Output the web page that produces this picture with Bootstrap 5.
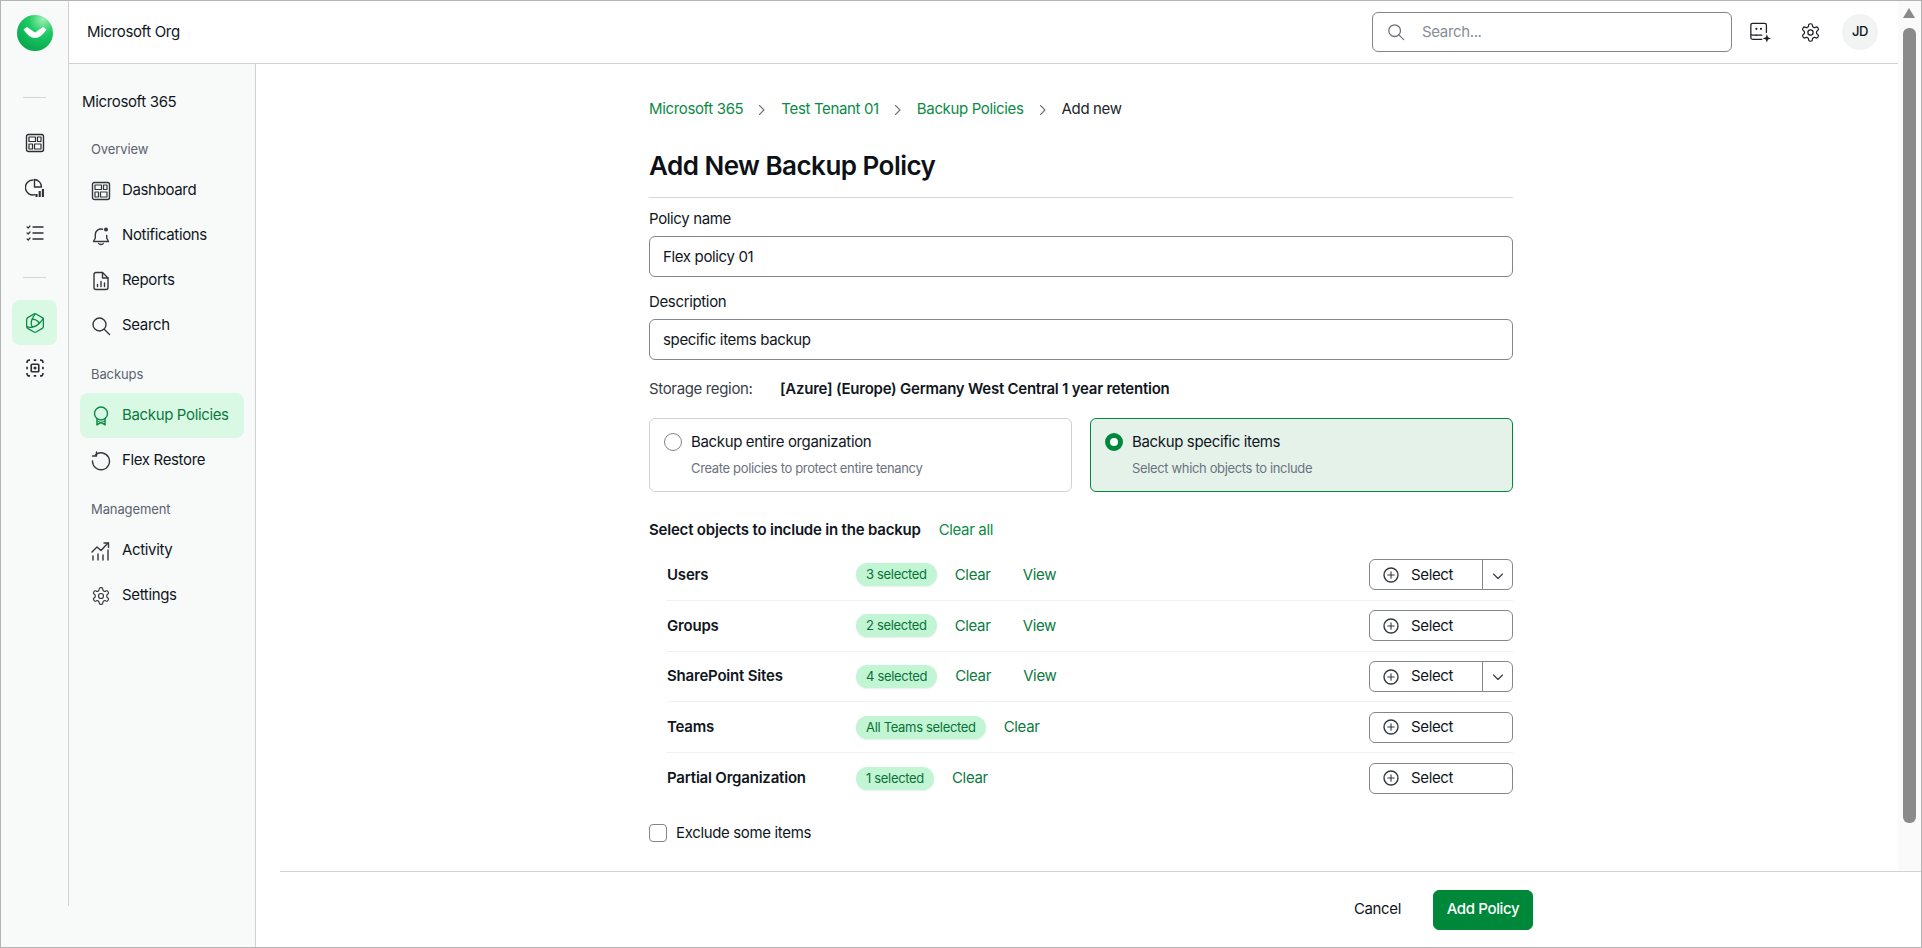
<!DOCTYPE html>
<html lang="en">
<head>
  <meta charset="UTF-8" />
  <meta name="viewport" content="width=device-width, initial-scale=1" />
  <title>Add New Backup Policy</title>
  <link href="https://cdn.jsdelivr.net/npm/bootstrap@5.3.2/dist/css/bootstrap.min.css" rel="stylesheet" />
  <style>
    html, body { height: 100%; overflow: hidden; }
    body { font-family: Inter, "Liberation Sans", sans-serif; font-size: 15px; letter-spacing: -0.35px; color: #10161d; background: #fff; }
    svg.ico { fill: none; stroke: currentColor; stroke-width: 1.4; stroke-linecap: round; stroke-linejoin: round; flex: none; }

    .app-frame { height: 948px; border: 1px solid #b4b4b4; position: relative; }

    .rail { width: 68px; background: #f8faf9; }
    .rail-inner { height: 905px; border-right: 1px solid #d2d2d2; }
    .rail-logo { margin-top: 14px; margin-bottom: 46px; flex: none; }
    .rail-rule { width: 23px; height: 1px; background: #d5d5d5; flex: none; }
    .rail-rule.first { margin-bottom: 22px; }
    .rail-rule.second { margin-top: 22px; margin-bottom: 22px; }
    .rail-btn { width: 45px; height: 45px; border-radius: 8px; color: #2b2f33; flex: none; }
    .rail-btn.is-on { background: #d9f9e5; color: #0a8a45; }

    .top-head { height: 63px; border-bottom: 1px solid #d2d2d2; padding-left: 18px; padding-right: 44px; }
    .search-box { width: 360px; height: 40px; border: 1px solid #80868c; border-radius: 6px; color: #6c7278; padding-left: 14px; gap: 17px; }
    .search-box input { border: 0; outline: 0; padding: 0; background: transparent; width: 100%; font-size: 15px; letter-spacing: inherit; }
    .search-box input::placeholder { color: #868e96; opacity: 1; }
    .head-btn { width: 50px; color: #1d2024; }
    .head-btn.first { margin-left: 3px; }
    .avatar { width: 36px; height: 36px; background: #f2f4f3; font-size: 13px; font-weight: 500; margin-left: 7px; margin-right: -1px; }

    .side-nav { width: 187px; background: #f8faf9; border-right: 1px solid #d2d2d2; }
    .side-title { padding: 26px 0 0 13px; line-height: 24px; }
    .side-label { padding-left: 22px; line-height: 24px; font-size: 13px; letter-spacing: -0.1px; color: #5b6370; margin-top: 14px; margin-bottom: 7px; }
    .side-title + .side-label { margin-top: 23px; }
    .side-item { height: 45px; margin-left: 11px; width: 164px; padding-left: 11px; gap: 11px; border-radius: 8px; color: #10161d; text-decoration: none; }
    .side-item svg { color: #33383d; }
    .side-item.is-on { background: #d9f9e5; color: #0a7a3e; }
    .side-item.is-on svg { color: #0a8a45; }

    .main-pane { padding-right: 15px; }
    .form-col { width: 864px; }
    .crumbs { margin: 0; padding-top: 34px; gap: 15px; line-height: 22px; }
    .crumbs .breadcrumb-item + .breadcrumb-item { padding-left: 0; }
    .crumbs .breadcrumb-item + .breadcrumb-item::before { display: none; }
    .crumbs a { color: #0a8a45; text-decoration: none; }
    .crumbs svg { color: #6f757b; margin-top: 1px; }
    .page-title { font-size: 26px; font-weight: 600; letter-spacing: -0.52px; line-height: 34px; margin: 29px 0 0; color: #0c1116; }
    .title-rule { margin: 14px 0 0; border-top: 1px solid #d5d5d5; opacity: 1; }
    .fld-label { line-height: 22px; margin-bottom: 6px; margin-top: 14px; display: block; }
    .title-rule + .fld-label { margin-top: 10px; }
    .fld-input { height: 41px; border-color: #80868c; border-radius: 6px; padding: 0 13px; font-size: 15px; color: #10161d; letter-spacing: inherit; }
    .region-line { margin-top: 18px; line-height: 22px; }
    .region-line span { width: 131px; color: #3a4047; }
    .region-line strong { letter-spacing: -0.24px; }
    .choice-row { margin-top: 18px; gap: 18px; }
    .choice-box { flex: 1; height: 74px; border: 1px solid #d2d2d2; border-radius: 6px; padding: 12px 14px; gap: 9px; margin: 0; }
    .choice-box.is-on { background: #e5f2ea; border-color: #00883a; }
    .choice-box .form-check-input { width: 18px; height: 18px; margin: 2px 0 0; border-color: #80868c; flex: none; }
    .choice-box .form-check-input:checked { background: #fff; border: 5px solid #00883a; box-shadow: none; }
    .choice-name { line-height: 22px; }
    .choice-hint { font-size: 13px; letter-spacing: -0.35px; color: #6b7280; line-height: 18px; margin-top: 6px; }
    .objects-head { margin-top: 27px; line-height: 22px; gap: 18px; font-weight: 600; letter-spacing: -0.2px; }
    .objects-head a { color: #0a8a45; text-decoration: none; font-weight: 400; letter-spacing: -0.35px; }
    .objects-list { margin-left: 18px; margin-top: 9.1px; }
    .obj-row { padding: 9.4px 0; border-bottom: 1px solid #f0f1f1; }
    .obj-row:last-child { border-bottom: 0; }
    .obj-name { width: 189px; font-weight: 600; letter-spacing: -0.2px; }
    .sel-pill { background: #c1f5d3; color: #0a7138; font-size: 13px; font-weight: 400; letter-spacing: -0.32px; padding: 0 10px; line-height: 23px; box-shadow: 0 1px 2px rgba(0,0,0,.08); }
    .obj-link { color: #0a7a3e; text-decoration: none; margin-left: 18px; width: 36px; }
    .obj-link + .obj-link { margin-left: 32px; }
    .pick-btn { height: 31px; border: 1px solid #80868c; border-radius: 6px; background: #fff; color: #10161d; font-size: 15px; letter-spacing: -0.35px; padding: 0; }
    .pick-group { width: 144px; }
    .pick-main { flex: 1; padding-left: 13px; gap: 12px; }
    .pick-main svg { color: #33383d; }
    .pick-more { width: 31px; flex: none !important; color: #33383d; }
    .excl-line { margin: 18.5px 0 0; gap: 9px; line-height: 22px; }
    .excl-line .form-check-input { width: 18px; height: 18px; margin: 0; border-color: #80868c; border-radius: 4px; flex: none; }

    .foot-bar { height: 76px; margin-left: 24px; border-top: 1px solid #d2d2d2; padding-right: 388px; gap: 32px; }
    .foot-cancel { background: none; border: 0; padding: 0; color: #10161d; font-size: 15px; letter-spacing: -0.35px; }
    .foot-add { width: 100px; height: 40px; padding: 0; background: #00883a; border-color: #00883a; border-radius: 6px; font-size: 15px; font-weight: 500; letter-spacing: -0.35px; }

    .fake-scroll { position: absolute; top: 0; right: 0; bottom: 76px; width: 23px; background: #fafafa; }
    .fake-scroll i { position: absolute; left: 5px; top: 7px; width: 0; height: 0; border-left: 6.5px solid transparent; border-right: 6.5px solid transparent; border-bottom: 10px solid #8a8a8a; }
    .fake-scroll b { position: absolute; left: 5px; top: 27px; width: 13px; height: 795px; background: #8a8a8a; border-radius: 6px; }
  </style>
</head>
<body>
<svg width="0" height="0" class="position-absolute">
  <defs>
    <radialGradient id="logoFill" cx="0.72" cy="0.12" r="1">
      <stop offset="0" stop-color="#9df0b4" />
      <stop offset="0.4" stop-color="#1dcb63" />
      <stop offset="1" stop-color="#06a24a" />
    </radialGradient>
    <symbol id="i-dash" viewBox="0 0 20 20"><rect x="1.500" y="1.500" width="17" height="17" rx="2" /><rect x="4" y="4" width="6.500" height="4.500" stroke-width="1.200" /><rect x="12.500" y="4" width="3.500" height="4.500" stroke-width="1.200" /><rect x="4" y="11" width="3.500" height="5" stroke-width="1.200" /><rect x="9.500" y="11" width="6.500" height="5" stroke-width="1.200" /></symbol>
    <symbol id="i-pie" viewBox="0 0 20 20"><path d="M8 2a7.500 7.500 0 1 0 2 14.700" /><path d="M9.500 1.500a7.500 7.500 0 0 1 7 7.500H9.500z" /><path d="M11.500 19v-3M14.700 19v-6M17.900 19v-8" stroke-width="2.100" stroke-linecap="butt" /></symbol>
    <symbol id="i-list" viewBox="0 0 20 20"><path d="M8 4h10M8 10h10M8 16h10" /><path d="M2 3.800l1.200 1.200L5 3M2 9.800l1.200 1.200L5 9M2 15.800l1.200 1.200L5 15" stroke-width="1.200" /></symbol>
    <symbol id="i-bell" viewBox="0 0 20 20"><path d="M11.500 3.200A5.700 5.700 0 0 0 4.300 8.700v3.300L2.500 15.500h15L15.700 12V9.500" /><path d="M7.700 17.500c.8 1.400 3.800 1.400 4.600 0" /><circle cx="15" cy="3.500" r="2" fill="currentColor" stroke="none" /></symbol>
    <symbol id="i-file" viewBox="0 0 20 20"><path d="M11.500 1.500H5a2 2 0 0 0-2 2v13a2 2 0 0 0 2 2h10a2 2 0 0 0 2-2V7z" /><path d="M11.500 1.500V7H17" /><path d="M6.500 15.500v-2M10 15.500v-5M13.500 15.500v-3.500" /></symbol>
    <symbol id="i-search" viewBox="0 0 20 20"><circle cx="8.500" cy="8.500" r="6.500" /><path d="M13.500 13.500l5 5" /></symbol>
    <symbol id="i-award" viewBox="0 0 20 20"><circle cx="10" cy="7.500" r="6.500" /><path d="M6 12.500V19l4-2.500 4 2.500v-6.500" /><path d="M6 15l8 3M14 15l-8 3" stroke-width="1" /></symbol>
    <symbol id="i-restore" viewBox="0 0 20 20"><path d="M4.500 3.800A8.500 8.500 0 1 1 1.500 10" /><path d="M5.500 1v4H1.500" /></symbol>
    <symbol id="i-activity" viewBox="0 0 20 20"><path d="M1 11l5-5 4 3.500 7-7.500" /><path d="M13 2h4.500v4.500" /><path d="M2 19v-4M7 19v-6M12 19v-5M17 19V9" stroke-width="1.400" /></symbol>
    <symbol id="i-gear" viewBox="0 0 24 24"><path d="M12.220 2h-.44a2 2 0 0 0-2 2v.18a2 2 0 0 1-1 1.730l-.43.250a2 2 0 0 1-2 0l-.15-.08a2 2 0 0 0-2.730.730l-.22.380a2 2 0 0 0 .730 2.730l.15.100a2 2 0 0 1 1 1.720v.510a2 2 0 0 1-1 1.740l-.15.090a2 2 0 0 0-.73 2.730l.22.380a2 2 0 0 0 2.730.730l.15-.08a2 2 0 0 1 2 0l.43.250a2 2 0 0 1 1 1.730V20a2 2 0 0 0 2 2h.44a2 2 0 0 0 2-2v-.18a2 2 0 0 1 1-1.730l.43-.25a2 2 0 0 1 2 0l.15.08a2 2 0 0 0 2.730-.73l.22-.39a2 2 0 0 0-.73-2.730l-.15-.08a2 2 0 0 1-1-1.740v-.5a2 2 0 0 1 1-1.740l.15-.09a2 2 0 0 0 .73-2.730l-.22-.38a2 2 0 0 0-2.730-.73l-.15.08a2 2 0 0 1-2 0l-.43-.25a2 2 0 0 1-1-1.730V4a2 2 0 0 0-2-2z" /><circle cx="12" cy="12" r="3" /></symbol>
    <symbol id="i-chat" viewBox="0 0 24 24"><path d="M8 15.500H4a2 2 0 0 1-2-2v-9a2 2 0 0 1 2-2h13a2 2 0 0 1 2 2v8" /><path d="M8 15.500h6" /><path d="M8 8.500h.1M13 8.500h.1" stroke-width="2.400" /><path d="M2 15v3a2 2 0 0 0 2 2h10" /><path d="M19.500 14.500l1.200 3.300 3.300 1.200-3.300 1.200-1.200 3.300-1.200-3.300-3.300-1.200 3.300-1.200z" fill="currentColor" stroke="none" /></symbol>
    <symbol id="i-hex" viewBox="0 0 24 24"><path d="M10.800 2.200a2.400 2.400 0 0 1 2.400 0l6.700 3.900a2.400 2.400 0 0 1 1.200 2v7.800a2.400 2.400 0 0 1-1.200 2l-6.700 3.900a2.400 2.400 0 0 1-2.400 0l-6.700-3.900a2.400 2.400 0 0 1-1.200-2V8.100a2.400 2.400 0 0 1 1.200-2z" /><path d="M9 7.500c3 .5 6 2 8 4.500-2 2.500-5 4-8 4.500-1.500-3-1.500-6 0-9z" /><path d="M9 7.500C10 5 11 3.500 12 2.200M17 12c1.500-1.500 3-3 4-5M9 16.500c-2 .5-4 .5-6-.5" /></symbol>
    <symbol id="i-scan" viewBox="0 0 24 24"><path d="M2.500 6V5A2.500 2.500 0 0 1 5 2.500h1M18 2.500h1A2.500 2.500 0 0 1 21.500 5v1M21.500 18v1a2.500 2.500 0 0 1-2.500 2.500h-1M6 21.500H5A2.500 2.500 0 0 1 2.500 19v-1M10.500 2.500h3M10.500 21.500h3M2.500 10.500v3M21.500 10.500v3" stroke-width="2" stroke-linecap="butt" /><rect x="7.500" y="7.500" width="9" height="9" rx="1" stroke-width="2" /><circle cx="12" cy="12" r="1.800" fill="currentColor" stroke="none" /></symbol>
    <symbol id="i-plus" viewBox="0 0 16 16"><circle cx="8" cy="8" r="7" /><path d="M8 4.800v6.400M4.800 8h6.400" stroke-width="1.100" /></symbol>
    <symbol id="i-chev-d" viewBox="0 0 12 12"><path d="M1.500 4l4.500 4.500L10.500 4" stroke-width="1.100" /></symbol>
    <symbol id="i-chev-r" viewBox="0 0 8 12"><path d="M1.500 1.500L6 6l-4.500 4.500" stroke-width="1.100" /></symbol>
  </defs>
</svg>

<div class="app-frame d-flex overflow-hidden">
  <!-- icon rail -->
  <aside class="rail flex-shrink-0">
    <div class="rail-inner d-flex flex-column align-items-center">
      <svg class="rail-logo" width="36" height="36" viewBox="0 0 36 36">
        <circle cx="18" cy="18" r="18" fill="url(#logoFill)" />
        <path d="M6.500 14.500L10 12l8 5.500L26 12l3.500 2.500Q24 23 18 23Q12 23 6.500 14.500Z" fill="#fff" />
      </svg>
      <div class="rail-rule first"></div>
      <div class="rail-btn d-flex align-items-center justify-content-center"><svg class="ico" width="20" height="20"><use href="#i-dash" /></svg></div>
      <div class="rail-btn d-flex align-items-center justify-content-center"><svg class="ico" width="20" height="20"><use href="#i-pie" /></svg></div>
      <div class="rail-btn d-flex align-items-center justify-content-center"><svg class="ico" width="20" height="20"><use href="#i-list" /></svg></div>
      <div class="rail-rule second"></div>
      <div class="rail-btn is-on d-flex align-items-center justify-content-center"><svg class="ico" width="22" height="22"><use href="#i-hex" /></svg></div>
      <div class="rail-btn d-flex align-items-center justify-content-center"><svg class="ico" width="20" height="20"><use href="#i-scan" /></svg></div>
    </div>
  </aside>

  <div class="flex-grow-1 d-flex flex-column min-w-0">
    <header class="top-head d-flex align-items-center flex-shrink-0">
      <div class="me-auto">Microsoft Org</div>
      <div class="search-box d-flex align-items-center">
        <svg class="ico" width="18" height="18"><use href="#i-search" /></svg>
        <input type="text" placeholder="Search..." />
      </div>
      <div class="head-btn first d-flex justify-content-center"><svg class="ico" width="22" height="22"><use href="#i-chat" /></svg></div>
      <div class="head-btn d-flex justify-content-center"><svg class="ico" width="21" height="21"><use href="#i-gear" /></svg></div>
      <div class="avatar rounded-circle d-flex align-items-center justify-content-center">JD</div>
    </header>

    <div class="flex-grow-1 d-flex min-h-0">
      <nav class="side-nav flex-shrink-0">
        <div class="side-title">Microsoft 365</div>
        <div class="side-label">Overview</div>
        <a class="side-item d-flex align-items-center" href="#"><svg class="ico" width="20" height="20"><use href="#i-dash" /></svg>Dashboard</a>
        <a class="side-item d-flex align-items-center" href="#"><svg class="ico" width="20" height="20"><use href="#i-bell" /></svg>Notifications</a>
        <a class="side-item d-flex align-items-center" href="#"><svg class="ico" width="20" height="20"><use href="#i-file" /></svg>Reports</a>
        <a class="side-item d-flex align-items-center" href="#"><svg class="ico" width="20" height="20"><use href="#i-search" /></svg>Search</a>
        <div class="side-label">Backups</div>
        <a class="side-item is-on d-flex align-items-center" href="#"><svg class="ico" width="20" height="20"><use href="#i-award" /></svg>Backup Policies</a>
        <a class="side-item d-flex align-items-center" href="#"><svg class="ico" width="20" height="20"><use href="#i-restore" /></svg>Flex Restore</a>
        <div class="side-label">Management</div>
        <a class="side-item d-flex align-items-center" href="#"><svg class="ico" width="20" height="20"><use href="#i-activity" /></svg>Activity</a>
        <a class="side-item d-flex align-items-center" href="#"><svg class="ico" width="20" height="20"><use href="#i-gear" /></svg>Settings</a>
      </nav>

      <div class="flex-grow-1 d-flex flex-column min-w-0">
        <main class="main-pane flex-grow-1">
          <div class="form-col mx-auto">
            <ol class="breadcrumb crumbs align-items-center">
              <li class="breadcrumb-item"><a href="#">Microsoft 365</a></li>
              <li class="d-flex"><svg class="ico" width="8" height="12"><use href="#i-chev-r" /></svg></li>
              <li class="breadcrumb-item"><a href="#">Test Tenant 01</a></li>
              <li class="d-flex"><svg class="ico" width="8" height="12"><use href="#i-chev-r" /></svg></li>
              <li class="breadcrumb-item"><a href="#">Backup Policies</a></li>
              <li class="d-flex"><svg class="ico" width="8" height="12"><use href="#i-chev-r" /></svg></li>
              <li class="breadcrumb-item active text-body">Add new</li>
            </ol>
            <h1 class="page-title">Add New Backup Policy</h1>
            <hr class="title-rule" />

            <label class="fld-label">Policy name</label>
            <input class="form-control fld-input" type="text" value="Flex policy 01" />
            <label class="fld-label">Description</label>
            <input class="form-control fld-input" type="text" value="specific items backup" />

            <div class="region-line d-flex"><span>Storage region:</span><strong class="fw-semibold">[Azure] (Europe) Germany West Central 1 year retention</strong></div>

            <div class="choice-row d-flex">
              <label class="choice-box d-flex">
                <input class="form-check-input" type="radio" name="scope" />
                <div><div class="choice-name">Backup entire organization</div><div class="choice-hint">Create policies to protect entire tenancy</div></div>
              </label>
              <label class="choice-box is-on d-flex">
                <input class="form-check-input" type="radio" name="scope" checked />
                <div><div class="choice-name">Backup specific items</div><div class="choice-hint">Select which objects to include</div></div>
              </label>
            </div>

            <div class="objects-head d-flex"><div>Select objects to include in the backup</div><a href="#">Clear all</a></div>

            <div class="objects-list">
              <div class="obj-row d-flex align-items-center">
                <div class="obj-name">Users</div>
                <span class="badge rounded-pill sel-pill">3 selected</span>
                <a class="obj-link" href="#">Clear</a><a class="obj-link" href="#">View</a>
                <div class="btn-group pick-group ms-auto">
                  <button class="btn pick-btn pick-main d-flex align-items-center"><svg class="ico" width="16" height="16"><use href="#i-plus" /></svg>Select</button>
                  <button class="btn pick-btn pick-more"><svg class="ico" width="12" height="12"><use href="#i-chev-d" /></svg></button>
                </div>
              </div>
              <div class="obj-row d-flex align-items-center">
                <div class="obj-name">Groups</div>
                <span class="badge rounded-pill sel-pill">2 selected</span>
                <a class="obj-link" href="#">Clear</a><a class="obj-link" href="#">View</a>
                <div class="btn-group pick-group ms-auto">
                  <button class="btn pick-btn pick-main d-flex align-items-center"><svg class="ico" width="16" height="16"><use href="#i-plus" /></svg>Select</button>
                </div>
              </div>
              <div class="obj-row d-flex align-items-center">
                <div class="obj-name">SharePoint Sites</div>
                <span class="badge rounded-pill sel-pill">4 selected</span>
                <a class="obj-link" href="#">Clear</a><a class="obj-link" href="#">View</a>
                <div class="btn-group pick-group ms-auto">
                  <button class="btn pick-btn pick-main d-flex align-items-center"><svg class="ico" width="16" height="16"><use href="#i-plus" /></svg>Select</button>
                  <button class="btn pick-btn pick-more"><svg class="ico" width="12" height="12"><use href="#i-chev-d" /></svg></button>
                </div>
              </div>
              <div class="obj-row d-flex align-items-center">
                <div class="obj-name">Teams</div>
                <span class="badge rounded-pill sel-pill">All Teams selected</span>
                <a class="obj-link" href="#">Clear</a>
                <div class="btn-group pick-group ms-auto">
                  <button class="btn pick-btn pick-main d-flex align-items-center"><svg class="ico" width="16" height="16"><use href="#i-plus" /></svg>Select</button>
                </div>
              </div>
              <div class="obj-row d-flex align-items-center">
                <div class="obj-name">Partial Organization</div>
                <span class="badge rounded-pill sel-pill">1 selected</span>
                <a class="obj-link" href="#">Clear</a>
                <div class="btn-group pick-group ms-auto">
                  <button class="btn pick-btn pick-main d-flex align-items-center"><svg class="ico" width="16" height="16"><use href="#i-plus" /></svg>Select</button>
                </div>
              </div>
            </div>

            <label class="excl-line d-flex align-items-center">
              <input class="form-check-input" type="checkbox" />
              <span>Exclude some items</span>
            </label>
          </div>
        </main>

        <footer class="foot-bar d-flex align-items-center justify-content-end flex-shrink-0">
          <button class="foot-cancel">Cancel</button>
          <button class="btn btn-success foot-add">Add Policy</button>
        </footer>
      </div>
    </div>
  </div>

  <div class="fake-scroll"><i></i><b></b></div>
</div>

<script src="https://cdn.jsdelivr.net/npm/bootstrap@5.3.2/dist/js/bootstrap.bundle.min.js"></script>
</body>
</html>
